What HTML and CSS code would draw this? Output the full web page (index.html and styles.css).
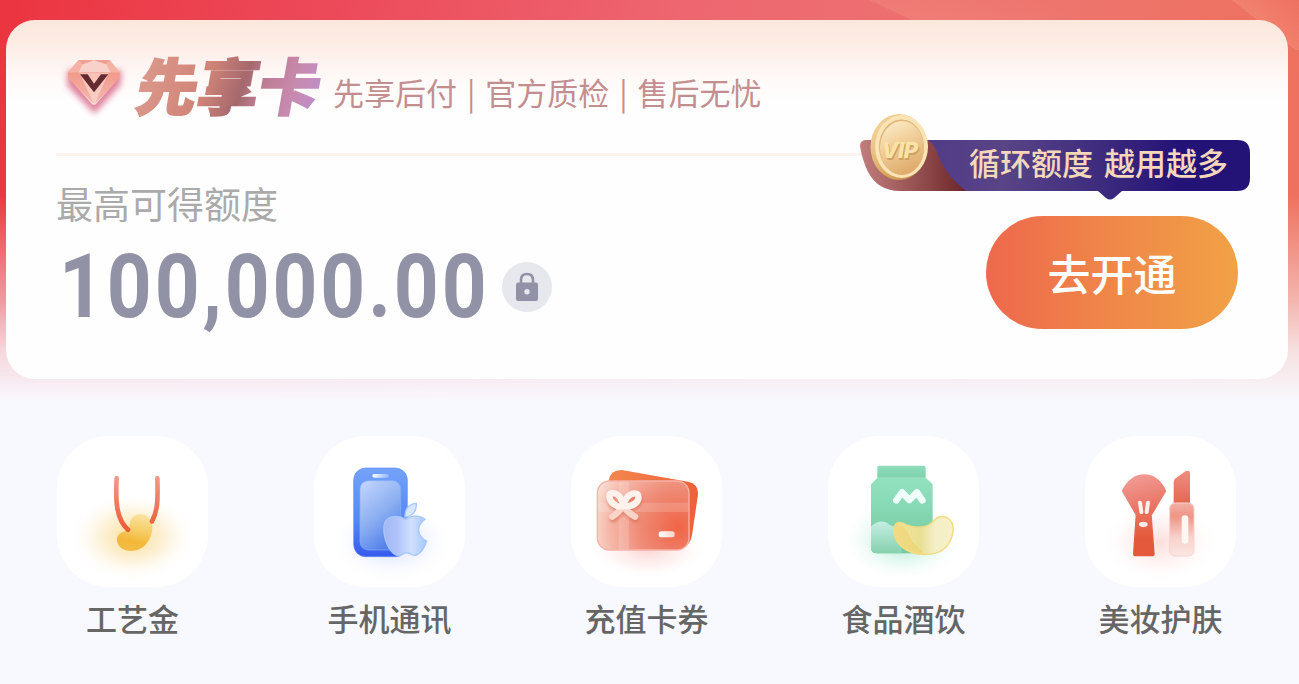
FILE: index.html
```html
<!DOCTYPE html>
<html lang="zh-CN">
<head>
<meta charset="utf-8">
<title>先享卡</title>
<link rel="stylesheet" href="styles.css">
</head>
<body>
<main class="page">
  <section class="card">
    <header class="card-head">
      <svg class="gem" width="68" height="68" viewBox="180 160 204 204">
        <defs>
          <filter id="soft" x="-30%" y="-30%" width="160%" height="160%"><feGaussianBlur stdDeviation="9"/></filter>
          <linearGradient id="gemL" x1="0" y1="0" x2="0" y2="1"><stop offset="0" stop-color="#f08d7c"/><stop offset="1" stop-color="#fae0dc"/></linearGradient>
        </defs>
        <path d="M202 212H364L362 255L284 342L202 258Z" fill="#d4587c" opacity=".75" filter="url(#soft)"/>
        <path d="M204 218L236 181H328L359 218V233L289 312Q282 319 275 312L204 233Z" fill="url(#gemL)"/>
        <path d="M204 218L236 181H328L359 218Z" fill="#f5b3a5"/>
        <path d="M236 218L248 194L282 181L318 194L332 218Z" fill="#f8d2ca"/>
        <path d="M236 181L248 194L282 181L318 194L328 181Z" fill="#efa093"/>
        <path d="M204 220H240L282 312L204 236ZM326 220H359V236L284 312Z" fill="#f2907f" opacity=".5"/>
        <path d="M238 220H326L282 312Z" fill="#f8cbc0" opacity=".75"/>
        <path d="M240 224H263L282 252L303 224H325L282 278Z" fill="#642b31"/>
      </svg>
      <h1 class="brand">先享卡</h1>
      <p class="slogan">先享后付 | 官方质检 | 售后无忧</p>
    </header>
    <div class="card-body">
      <div class="quota">
        <div class="quota-label">最高可得额度</div>
        <div class="quota-row">
          <div class="amount">100,000.00</div>
          <svg class="lock" width="50" height="50" viewBox="0 0 50 50">
            <circle cx="25" cy="25" r="25" fill="#e7e7ee"/>
            <path d="M19 22V18Q19 12 25 12T31 18V22" fill="none" stroke="#9192a6" stroke-width="2.6"/>
            <rect x="14" y="20.500" width="22" height="18.500" rx="2" fill="#9192a6"/>
            <circle cx="25" cy="29.700" r="2.700" fill="#e7e7ee"/>
          </svg>
        </div>
      </div>
      <button class="open-btn">去开通</button>
    </div>
    <div class="promo">
      <svg class="promo-bg" width="392" height="88" viewBox="0 0 392 88">
        <defs>
          <linearGradient id="navy"><stop offset="0" stop-color="#4f3a88"/><stop offset=".25" stop-color="#594486"/><stop offset=".55" stop-color="#3d2b7e"/><stop offset=".78" stop-color="#241377"/><stop offset="1" stop-color="#241377"/></linearGradient>
          <linearGradient id="maroon"><stop offset="0" stop-color="#c17e7d"/><stop offset=".5" stop-color="#985454"/><stop offset="1" stop-color="#6c2428"/></linearGradient>
          <linearGradient id="coinRim" x1="0" y1="0" x2="1" y2="1"><stop offset="0" stop-color="#f9dfab"/><stop offset=".55" stop-color="#dcaa62"/><stop offset="1" stop-color="#bb8243"/></linearGradient>
          <linearGradient id="coinFace" x1="0" y1="0" x2=".4" y2="1"><stop offset="0" stop-color="#fdf0cf"/><stop offset=".5" stop-color="#f1cf99"/><stop offset="1" stop-color="#dfae6d"/></linearGradient>
        </defs>
        <path d="M60 28H377Q390 28 390 41V66Q390 79 377 79H262L254 86Q250 89 246 86L238 79H60Z" fill="url(#navy)"/>
        <path d="M5 28H67Q73 30 77 40Q84 62 106 79H40Q18 79 8 60Q2 47 0 34Q0 29 5 28Z" fill="url(#maroon)"/>
        <ellipse cx="39" cy="35" rx="28.500" ry="33" fill="url(#coinRim)"/>
        <ellipse cx="41.500" cy="34.500" rx="26.500" ry="31.500" fill="#fae4b5"/>
        <ellipse cx="41.500" cy="35" rx="22.500" ry="27.500" fill="#e0b57a"/>
        <ellipse cx="42" cy="36" rx="22" ry="27" fill="url(#coinFace)"/>
        <text x="22.500" y="47.500" class="coin-shadow">VIP</text>
        <text x="21.500" y="45.500" class="coin-text">VIP</text>
      </svg>
      <span class="promo-text">循环额度 越用越多</span>
    </div>
  </section>

  <nav class="cats">
    <a class="cat">
      <svg class="tile" viewBox="52 47 453 453">
        <defs>
          <radialGradient id="glowY"><stop offset="0" stop-color="#f9d77f" stop-opacity=".85"/><stop offset=".5" stop-color="#fbe6b5" stop-opacity=".55"/><stop offset="1" stop-color="#fff" stop-opacity="0"/></radialGradient>
          <linearGradient id="cord" gradientUnits="userSpaceOnUse" x1="0" y1="168" x2="0" y2="330"><stop offset="0" stop-color="#f19a8a"/><stop offset="1" stop-color="#ec5b36"/></linearGradient>
          <linearGradient id="gold" x1=".6" y1="0" x2=".4" y2="1"><stop offset="0" stop-color="#fae3a0"/><stop offset=".4" stop-color="#f6ce69"/><stop offset=".75" stop-color="#f3b738"/><stop offset="1" stop-color="#f4bd47"/></linearGradient>
        </defs>
        <ellipse cx="279" cy="350" rx="190" ry="135" fill="url(#glowY)"/>
        <path d="M270 312C272 290 288 281 305 282C326 284 339 300 338 324C335 363 308 392 276 392C250 392 233 379 232 360C231 337 251 335 262 330Q269 324 270 312Z" fill="url(#gold)"/>
        <path d="M231 174C227 242 230 298 265 328M353 174C355 240 354 272 337 303" fill="none" stroke="url(#cord)" stroke-width="14" stroke-linecap="round"/>
      </svg>
      <span class="cat-name">工艺金</span>
    </a>
    <a class="cat">
      <svg class="tile" viewBox="42 47 453 453">
        <defs>
          <radialGradient id="glowB"><stop offset="0" stop-color="#b8c8ff" stop-opacity=".65"/><stop offset=".6" stop-color="#e5ebff" stop-opacity=".35"/><stop offset="1" stop-color="#fff" stop-opacity="0"/></radialGradient>
          <linearGradient id="phone" x1="0" y1="0" x2="0" y2="1"><stop offset="0" stop-color="#74a3fa"/><stop offset=".6" stop-color="#5287f6"/><stop offset="1" stop-color="#365aec"/></linearGradient>
          <linearGradient id="screen" x1=".2" y1="0" x2=".7" y2="1"><stop offset="0" stop-color="#bed2fc"/><stop offset=".5" stop-color="#8baff1"/><stop offset="1" stop-color="#4c7aea"/></linearGradient>
          <linearGradient id="apple"><stop offset="0" stop-color="#a1b7f5"/><stop offset=".3" stop-color="#b0c3fa"/><stop offset=".65" stop-color="#d0e0fd"/><stop offset="1" stop-color="#a2c8fa"/></linearGradient>
          <linearGradient id="notch"><stop offset="0" stop-color="#fff"/><stop offset="1" stop-color="#91b3fb"/></linearGradient>
        </defs>
        <ellipse cx="275" cy="365" rx="185" ry="125" fill="url(#glowB)"/>
        <rect x="161" y="143" width="161" height="266" rx="36" fill="url(#phone)" stroke="#5e8ff5" stroke-width="2"/>
        <rect x="180" y="181" width="122" height="208" rx="25" fill="url(#screen)" stroke="#8aaffa" stroke-width="2"/>
        <rect x="217" y="161" width="50" height="11" rx="5.500" fill="url(#notch)"/>
        <path d="M315 290C313 267 327 250 349 249C351 270 338 288 315 290Z" fill="#d9e6ff" stroke="#a6c8fc" stroke-width="4"/>
        <path d="M317 297C303 288 288 287 275 290C256 295 250 314 252 335C255 370 273 401 295 406C305 406 310 398 320 397C331 398 337 406 347 405C362 400 373 383 380 362C352 349 346 318 375 297C359 283 332 285 317 297Z" fill="url(#apple)" stroke="#a7c7fb" stroke-width="4"/>
      </svg>
      <span class="cat-name">手机通讯</span>
    </a>
    <a class="cat">
      <svg class="tile" viewBox="34 47 453 453">
        <defs>
          <radialGradient id="glowR"><stop offset="0" stop-color="#f6aaa2" stop-opacity=".5"/><stop offset=".6" stop-color="#fbd6d2" stop-opacity=".28"/><stop offset="1" stop-color="#fff" stop-opacity="0"/></radialGradient>
          <linearGradient id="cardBack"><stop offset="0" stop-color="#f3874f"/><stop offset="1" stop-color="#ee6038"/></linearGradient>
          <radialGradient id="cardFront" gradientUnits="userSpaceOnUse" cx="355" cy="320" r="260"><stop offset="0" stop-color="#f06447"/><stop offset=".45" stop-color="#ef8b76"/><stop offset=".8" stop-color="#f5b8a9"/><stop offset="1" stop-color="#f9dcd3"/></radialGradient>
          <linearGradient id="chip"><stop offset="0" stop-color="#fff"/><stop offset="1" stop-color="#fad5ca"/></linearGradient>
          <filter id="bowShade" x="-30%" y="-30%" width="170%" height="180%"><feDropShadow dx="2" dy="8" stdDeviation="5" flood-color="#d66548" flood-opacity=".6"/></filter>
        </defs>
        <ellipse cx="265" cy="385" rx="175" ry="90" fill="url(#glowR)"/>
        <path d="M147 180Q153 148 186 149L385 184Q417 191 415 222L397 345Q392 375 370 380L147 250Z" fill="url(#cardBack)"/>
        <rect x="113" y="182" width="275" height="207" rx="36" fill="url(#cardFront)" stroke="#f6b3a8" stroke-width="4"/>
        <path d="M115 247H386V275H115ZM177 184H208V388H177Z" fill="#fff" opacity=".16"/>
        <g filter="url(#bowShade)" fill="none" stroke="#fff2ec" stroke-width="19" stroke-linecap="round" stroke-linejoin="round">
          <path d="M158 289Q176 278 190 257Q206 278 226 289" stroke="#fbd4c8"/>
          <path d="M191 257C171 264 149 246 149 228C148 214 168 217 179 228Q189 239 191 257C194 238 207 219 226 219C240 219 240 239 226 250Q211 261 191 257"/>
        </g>
        <rect x="297" y="333" width="48" height="18" rx="8" fill="url(#chip)"/>
      </svg>
      <span class="cat-name">充值卡券</span>
    </a>
    <a class="cat">
      <svg class="tile" viewBox="39 47 453 453">
        <defs>
          <radialGradient id="glowG"><stop offset="0" stop-color="#8ce0c0" stop-opacity=".8"/><stop offset=".55" stop-color="#c9f2e3" stop-opacity=".42"/><stop offset="1" stop-color="#fff" stop-opacity="0"/></radialGradient>
          <linearGradient id="bag" x1="0" y1="0" x2="0" y2="1"><stop offset="0" stop-color="#92e2c0"/><stop offset="1" stop-color="#75c9a1"/></linearGradient>
          <linearGradient id="bagCap" x1="0" y1="0" x2="0" y2="1"><stop offset="0" stop-color="#8fdebd"/><stop offset="1" stop-color="#7dd1ab"/></linearGradient>
          <linearGradient id="wave" x1="0" y1="0" x2="0" y2="1"><stop offset="0" stop-color="#c5eee2"/><stop offset="1" stop-color="#86d1ae"/></linearGradient>
          <linearGradient id="chips" x1="0" y1="0" x2="1" y2="0"><stop offset="0" stop-color="#f5e6a0"/><stop offset=".45" stop-color="#e8df92"/><stop offset=".7" stop-color="#f3efc7"/><stop offset="1" stop-color="#f7efc7"/></linearGradient>
        </defs>
        <ellipse cx="263" cy="360" rx="185" ry="125" fill="url(#glowG)"/>
        <path d="M187 172L168 192V382Q168 399 185 399H353V192L332 172Z" fill="url(#bag)"/>
        <path d="M187 142Q187 136 193 136H326Q332 136 332 142V172H187Z" fill="url(#bagCap)"/>
        <path d="M168 318C187 300 208 300 221 312Q236 325 260 315V399H185Q168 399 168 382Z" fill="url(#wave)"/>
        <path d="M244 240L261 216L283 239L306 216L322 240" fill="none" stroke="#f0fff9" stroke-width="20" stroke-linecap="round" stroke-linejoin="round"/>
        <path d="M238 319C244 303 258 303 274 314C304 324 333 324 354 304C369 285 390 283 406 300C422 319 414 358 391 382C368 404 324 408 286 395C253 382 229 348 238 319Z" fill="url(#chips)" stroke="#f2db7d" stroke-width="4"/>
        <path d="M239 320C246 303 260 307 271 325C282 357 301 387 328 399C282 400 231 366 239 320Z" fill="#f0cf65" opacity=".5"/>
        <path d="M275 334Q286 369 319 394" fill="none" stroke="#eed26e" stroke-width="4" opacity=".7"/>
      </svg>
      <span class="cat-name">食品酒饮</span>
    </a>
    <a class="cat">
      <svg class="tile" viewBox="45 47 453 453">
        <defs>
          <linearGradient id="brush" x1="0" y1="0" x2=".3" y2="1"><stop offset="0" stop-color="#f3a09c"/><stop offset="1" stop-color="#e8705f"/></linearGradient>
          <linearGradient id="handle" x1="0" y1="0" x2="0" y2="1"><stop offset="0" stop-color="#ea7059"/><stop offset=".6" stop-color="#e3593b"/><stop offset="1" stop-color="#e4593b"/></linearGradient>
          <linearGradient id="stick" x1="0" y1="0" x2="0" y2="1"><stop offset="0" stop-color="#ef8c83"/><stop offset="1" stop-color="#e4694f"/></linearGradient>
          <linearGradient id="tube" x1="0" y1="0" x2="0" y2="1"><stop offset="0" stop-color="#f3b1a6"/><stop offset=".25" stop-color="#ee9585"/><stop offset=".65" stop-color="#f8d2cc"/><stop offset="1" stop-color="#fbe6e3"/></linearGradient>
        </defs>
        <ellipse cx="270" cy="365" rx="175" ry="120" fill="url(#glowR)" opacity=".75"/>
        <path d="M155 212Q180 162 223 162Q265 162 289 212L246 284H197Z" fill="url(#brush)"/>
        <path d="M197 282H245L254 400Q254 408 246 408H197Q189 408 189 400Z" fill="url(#handle)"/>
        <path d="M210 247L214 275M234 247L230 275" stroke="#fff0ed" stroke-width="12" stroke-linecap="round"/>
        <ellipse cx="220" cy="312" rx="13" ry="8" fill="#fff0ed"/>
        <path d="M311 248V186Q311 179 317 174L346 153Q360 148 360 160V248Z" fill="url(#stick)"/>
        <rect x="299" y="248" width="73" height="159" rx="16" fill="url(#tube)" stroke="#f8d3ce" stroke-width="3"/>
        <rect x="335" y="285" width="20" height="85" rx="9" fill="#fff7f4"/>
      </svg>
      <span class="cat-name">美妆护肤</span>
    </a>
  </nav>
</main>
</body>
</html>
```

FILE: styles.css
```css
* {
  box-sizing: border-box;
}

body {
  margin: 0;
  background: #f8f9fe;
  font-family: "Noto Sans CJK SC", sans-serif;
}

.page {
  width: 1299px;
  height: 684px;
  padding: 20px 11px 0 6px;
  overflow: hidden;
  background:
    linear-gradient(180deg, rgba(248, 249, 254, 0) 195px, rgba(248, 249, 254, .5) 300px, rgba(248, 249, 254, .82) 350px, rgba(248, 249, 254, .92) 380px, #f8f9fe 402px),
    linear-gradient(25deg, transparent 50%, rgba(255, 190, 150, .16) 50%, transparent 90%) 782px 0 / 303px 60px no-repeat,
    linear-gradient(38deg, transparent 50%, rgba(255, 190, 160, .2) 50%, transparent) 1228px 0 / 71px 50px no-repeat,
    linear-gradient(100deg, #eb3540 0%, #ec4858 22%, #ed6670 48%, #ed756f 72%, #ee7059 100%);
}

.card {
  position: relative;
  width: 1282px;
  height: 359px;
  padding: 0 50px;
  border-radius: 29px;
  background: linear-gradient(180deg, #fbe7dc 0, #fcece4 22px, #fdf2ef 40px, #fffaf8 60px, #fefefe 82px);
}

.card-head {
  display: flex;
  height: 136px;
  border-bottom: 3px solid #f9f2ef;
}

.gem {
  flex: none;
  margin: 33px 0 0 4px;
}

.brand {
  flex: none;
  width: 190px;
  height: 66px;
  margin: 31px 0 0 8px;
  padding-left: 2px;
  font-size: 61px;
  font-weight: 900;
  line-height: 66px;
  letter-spacing: 0;
  color: transparent;
  background: linear-gradient(100deg, #dc9b8d 0%, #d08478 37%, #a5686d 56%, #be7c93 66%, #c78aae 82%, #bb8fd0 100%);
  background-clip: text;
  -webkit-background-clip: text;
  -webkit-text-stroke: 2px transparent;
  transform: skewX(-10deg);
}

.slogan {
  margin: 51px 0 0 7px;
  font-size: 31px;
  font-weight: 400;
  line-height: 42px;
  word-spacing: 3px;
  white-space: nowrap;
  color: #c38e90;
}

.card-body {
  display: flex;
  justify-content: space-between;
}

.quota-label {
  margin-top: 25px;
  font-size: 37px;
  line-height: 44px;
  color: #aaa;
}

.quota-row {
  display: flex;
  align-items: center;
  margin-top: 22px;
}

.amount {
  width: 443px;
  height: 80px;
  margin-left: 3px;
  font-family: Roboto, sans-serif;
  font-size: 89px;
  font-weight: 700;
  line-height: 80px;
  letter-spacing: 3.300px;
  white-space: nowrap;
  color: #9192a6;
  transform: scaleX(.88);
  transform-origin: 0 50%;
}

.lock {
  flex: none;
}

.open-btn {
  width: 252px;
  height: 113px;
  margin: 60px 0 0;
  padding: 0;
  border: 0;
  border-radius: 57px;
  background: linear-gradient(90deg, #ee684d, #ef8649 48%, #f1a246);
  color: #fff;
  font-family: inherit;
  font-size: 43px;
  font-weight: 500;
  line-height: 109px;
}

/* Promo ribbon hangs over the divider above the button */
.promo {
  position: absolute;
  left: 854px;
  top: 92px;
  width: 392px;
  height: 88px;
  padding: 28px 0 0 109px;
}

.promo-bg {
  position: absolute;
  left: 0;
  top: 0;
}

.promo-text {
  position: relative;
  display: block;
  font-size: 31px;
  font-weight: 500;
  line-height: 44px;
  word-spacing: 4px;
  white-space: nowrap;
  color: #f5d8bc;
}

.coin-text,
.coin-shadow {
  font: italic 800 22px Inter, sans-serif;
  letter-spacing: -.5px;
}

.coin-text {
  fill: #fbe2a6;
}

.coin-shadow {
  fill: #cfa064;
}

.cats {
  display: flex;
  justify-content: space-between;
  padding: 57px 52px 0 51px;
}

.cat {
  display: flex;
  flex-direction: column;
  align-items: center;
  width: 151px;
}

.tile {
  width: 151px;
  height: 151px;
  border-radius: 52px;
  background: #fff;
}

.cat-name {
  margin-top: 8px;
  font-size: 31px;
  font-weight: 500;
  line-height: 46px;
  white-space: nowrap;
  color: #666;
}
```
